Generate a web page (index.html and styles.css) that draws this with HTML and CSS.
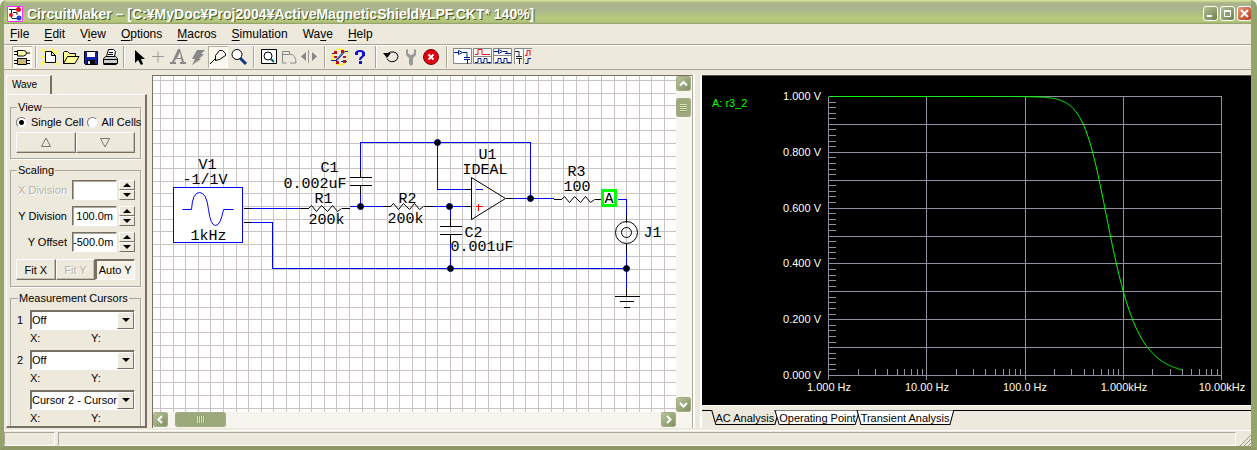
FILE: index.html
```html
<!DOCTYPE html>
<html lang="en">
<head>
<meta charset="utf-8">
<title>CircuitMaker</title>
<link rel="stylesheet" href="styles.css">
</head>
<body>
<div class="window">
  <header class="titlebar">
    <svg class="app-icon" width="16" height="16" viewBox="0 0 16 16"><path fill="#fff" stroke="#f3f" d="M.5 .5h15v15H.5z"/><path fill="none" stroke="#222" d="M2 3.500h8M4.500 4v8M6 6.500h4V9M5 12.500h6"/><circle cx="11.500" cy="3.500" r="2.500" fill="#e11"/><circle cx="4" cy="9" r="2" fill="#e11"/><circle cx="12" cy="12" r="2.500" fill="#14d"/></svg>
    <h1 class="title">CircuitMaker – [C:¥MyDoc¥Proj2004¥ActiveMagneticShield¥LPF.CKT* 140%]</h1>
    <div class="window-buttons">
      <button class="win-btn" aria-label="Minimize"><svg width="13" height="13"><path fill="#fff" d="M3 8h5v2H3z"/></svg></button>
      <button class="win-btn" aria-label="Maximize"><svg width="13" height="13"><path fill="none" stroke="#fff" d="M3.500 3.500h6v6h-6zM3 4.500h7"/></svg></button>
      <button class="win-btn close" aria-label="Close"><svg width="13" height="13"><path stroke="#fff" stroke-width="2" d="M3 3l7 7M10 3l-7 7"/></svg></button>
    </div>
  </header>
  <nav class="menubar">
    <button><u>F</u>ile</button><button><u>E</u>dit</button><button>V<u>i</u>ew</button><button><u>O</u>ptions</button><button><u>M</u>acros</button><button><u>S</u>imulation</button><button>Wa<u>v</u>e</button><button><u>H</u>elp</button>
  </nav>
  <div class="toolbar" role="toolbar">
    <button class="tool pressed" aria-label="Parts"><svg width="20" height="20" viewBox="0 0 20 20"><path d="M5.500 3.500h6q3 0 3 2.500t-3 3h-6zM2 4.500h3M2 7.500h3M15 6h3" fill="#ffa" stroke="#000"/><path d="M5.500 11.500h9v6h-9z" fill="#c8b880" stroke="#000"/><path d="M2 13.500h3M2 16.500h3M15 13.500h3M15 16.500h3" stroke="#000"/></svg></button>
    <span class="sep"></span>
    <button class="tool" aria-label="New"><svg width="20" height="20" viewBox="0 0 20 20"><path stroke="#ff3" stroke-width="2" d="M2 2l5 5M13 1v5M18 4l-4 4M1 18l5-5M18 18l-4-4M1 10h4"/><path fill="#fff" stroke="#000" d="M5.500 4.500h6l4 4v7h-10zM11.500 4.500v4h4"/></svg></button>
    <button class="tool" aria-label="Open"><svg width="20" height="20" viewBox="0 0 20 20"><path fill="#ff9" stroke="#000" d="M3.500 16.500v-11l1-1h3l2 2h6v3M3.500 16.500l4-7h11.500l-4 7z"/></svg></button>
    <button class="tool" aria-label="Save"><svg width="20" height="20" viewBox="0 0 20 20"><path fill="#12a" stroke="#000" d="M4.500 4.500h13v13h-12l-1-1z"/><path fill="#fff" d="M7 5h8v5H7z"/><path fill="#000" d="M7 13h8v4H7z"/><path fill="#ddd" d="M8 14h2v3H8z"/></svg></button>
    <button class="tool" aria-label="Print"><svg width="20" height="20" viewBox="0 0 20 20"><path fill="#fff" stroke="#000" d="M6.500 9.500l2-7h5l2 2-1 5M9 5.500h4M8 7.500h5"/><path fill="#ccc" stroke="#000" d="M3.500 11.500l2-2h10l2 2v5h-14zM3 12.500h14M3.500 17.500h13"/></svg></button>
    <span class="sep"></span>
    <button class="tool" aria-label="Select"><svg width="20" height="20" viewBox="0 0 20 20"><path d="M7 3v13l3-3 3 5 2-1-2-5h4z"/></svg></button>
    <button class="tool" aria-label="Wire"><svg width="20" height="20" viewBox="0 0 20 20"><path stroke="#999" d="M10 4.500v11M4 9.500h12"/></svg></button>
    <button class="tool" aria-label="Text"><svg width="20" height="20" viewBox="0 0 20 20"><path fill="#888" d="M10 2h2l4 13h2v2h-6v-2h2l-1-3H8l-2 3h2v2H2v-2h2zM9 11h4l-1-6z"/></svg></button>
    <button class="tool" aria-label="Delete"><svg width="20" height="20" viewBox="0 0 20 20"><path fill="#888" d="M9 3h8l-4 4h3l-5 5h2l-9 6 3-6H4z"/></svg></button>
    <button class="tool pressed" aria-label="Probe"><svg width="20" height="20" viewBox="0 0 20 20"><path fill="none" stroke="#000" d="M2 17l6-6M7.500 8.500l4-5h3l3 3v2l-6 4-4 1z"/></svg></button>
    <button class="tool" aria-label="Zoom"><svg width="20" height="20" viewBox="0 0 20 20"><circle cx="9" cy="7.500" r="5" fill="#fff" stroke="#000"/><path stroke="#138" stroke-width="3" d="M12 11l6 6"/></svg></button>
    <span class="sep wide"></span>
    <button class="tool" aria-label="Fit"><svg width="20" height="20" viewBox="0 0 20 20"><path fill="#fff" stroke="#000" d="M2.500 2.500h15v14h-15z"/><circle cx="9" cy="9" r="4" fill="none" stroke="#000"/><path stroke="#066" stroke-width="2" d="M12 12l3 3"/></svg></button>
    <button class="tool" aria-label="Rotate"><svg width="20" height="20" viewBox="0 0 20 20"><path fill="none" stroke="#888" d="M3.500 4.500h7v3h-7zM3.500 7v9h4M11 7q6 1 6 9h-6"/></svg></button>
    <button class="tool" aria-label="Mirror"><svg width="20" height="20" viewBox="0 0 20 20"><path fill="#888" d="M7 5v9L2 9.500zM13 5v9l5-4.500z"/><path stroke="#999" d="M9.500 3v13"/></svg></button>
    <span class="sep wide"></span>
    <button class="tool" aria-label="Check"><svg width="20" height="20" viewBox="0 0 20 20"><circle cx="10" cy="10" r="8" fill="none" stroke="#fe0"/><path stroke="#129" fill="none" d="M1 13.500h6l8-9h3M2 6.500h4M11 14.500h6M6 13l8-9"/><path fill="#b11" d="M4 4h3v3H4zM11 3h3v3h-3zM4 9h3v2H4zM13 9h3v2h-3zM6 14h3v3H6zM13 13h3v3h-3z"/></svg></button>
    <button class="tool" aria-label="Help"><svg width="20" height="20" viewBox="0 0 20 20"><path fill="none" stroke="#11c" stroke-width="2" d="M6 7q0-3 4-3t4 3q0 2-2 3t-2 3"/><path fill="#11c" d="M9 14h3v3H9zM5 5h3v3H5zM12 5h3v4h-3z"/></svg></button>
    <span class="sep wide"></span>
    <button class="tool" aria-label="Reset"><svg width="20" height="20" viewBox="0 0 20 20"><path fill="none" stroke="#000" d="M6 7q3-3 7-2 4 1 4 4.500t-4 5q-5 1-7-3"/><path d="M2 6h8l-4 5z"/></svg></button>
    <button class="tool" aria-label="Step"><svg width="20" height="20" viewBox="0 0 20 20"><path fill="#999" d="M5 3l2-1v4l2 2h2l2-2V2l2 1v5l-3 3v6l-2 2-2-2v-6L5 8z"/></svg></button>
    <button class="tool" aria-label="Stop"><svg width="20" height="20" viewBox="0 0 20 20"><circle cx="10" cy="10" r="7.500" fill="#e00010" stroke="#700"/><path stroke="#fff" stroke-width="2" d="M7.500 7.500l5 5M12.500 7.500l-5 5"/></svg></button>
    <span class="sep wide"></span>
    <button class="tool" aria-label="Schematic view"><svg width="20" height="20" viewBox="0 0 20 20"><path fill="#fff" stroke="#888" d="M1.500 1.500h18v15h-18z"/><path fill="none" stroke="#028" d="M2 5.500h4M6.500 3.500v4l4-2zM11 5.500h4v5M12 10.500h6M12 12.500h6M15.500 13v4"/></svg></button>
    <button class="tool" aria-label="Waveforms view"><svg width="20" height="20" viewBox="0 0 20 20"><path fill="#fff" stroke="#888" d="M1.500 1.500h18v15h-18zM2 9.500h17"/><path fill="none" stroke="#e11" d="M3 7.500h3v-5h4v5h8"/><path fill="none" stroke="#028" d="M3 15.500h3v-4h3v4h3v-4h3v4h4"/></svg></button>
    <button class="tool" aria-label="Split horizontally"><svg width="20" height="20" viewBox="0 0 20 20"><path fill="#fff" stroke="#888" d="M1.500 1.500h18v15h-18zM2 8.500h17"/><path fill="none" stroke="#028" d="M2 4.500h4M6.500 2.500v4l4-2zM11 4.500h4v2M13 6.500h6M3 15.500h3v-4h3v4h3v-4h3v4h4"/></svg></button>
    <button class="tool" aria-label="Split vertically"><svg width="20" height="20" viewBox="0 0 20 20"><path fill="#fff" stroke="#888" d="M2.500 17V1.500H20M11.500 2v15"/><path fill="none" stroke="#222" d="M3 4.500h4v5M4 9.500h6M4 11.500h6M7.500 12v5"/><path fill="none" stroke="#e11" d="M13 8.500h2v-5h3v5"/><path fill="none" stroke="#028" d="M13 16.500h3v-5h3"/></svg></button>
  </div>
  <main class="workspace">
    <aside class="sidebar">
      <div class="tabs" role="tablist"><button class="side-tab" role="tab" aria-selected="true">Wave</button></div>
      <div class="pane">
        <fieldset class="group">
          <legend>View</legend>
          <div class="radios">
            <label><input type="radio" name="view" checked>Single Cell</label>
            <label><input type="radio" name="view">All Cells</label>
          </div>
          <div class="button-row">
            <button class="btn" aria-label="Previous"><svg width="12" height="11"><path fill="none" stroke="#776" d="M1.500 9.500h9L6 1z"/></svg></button>
            <button class="btn" aria-label="Next"><svg width="12" height="11"><path fill="none" stroke="#776" d="M1.500 1.500h9L6 10z"/></svg></button>
          </div>
        </fieldset>
        <fieldset class="group scaling">
          <legend>Scaling</legend>
          <div class="field"><label class="disabled" for="xdiv">X Division</label><input id="xdiv" type="text" value="" disabled><span class="spin"><button aria-label="Increase X division"><i class="up"></i></button><button aria-label="Decrease X division"><i class="down"></i></button></span></div>
          <div class="field"><label for="ydiv">Y Division</label><input id="ydiv" type="text" value="100.0m"><span class="spin"><button aria-label="Increase Y division"><i class="up"></i></button><button aria-label="Decrease Y division"><i class="down"></i></button></span></div>
          <div class="field"><label for="yoff">Y Offset</label><input id="yoff" type="text" value="-500.0m"><span class="spin"><button aria-label="Increase Y offset"><i class="up"></i></button><button aria-label="Decrease Y offset"><i class="down"></i></button></span></div>
          <div class="button-row fit"><button class="btn">Fit X</button><button class="btn" disabled>Fit Y</button><button class="btn down-state">Auto Y</button></div>
        </fieldset>
        <fieldset class="group cursors">
          <legend>Measurement Cursors</legend>
          <div class="cursor"><label for="c1">1</label><span class="combo"><select id="c1"><option>Off</option></select><i class="drop"></i></span></div>
          <div class="xy"><span>X:</span><span>Y:</span></div>
          <div class="cursor"><label for="c2">2</label><span class="combo"><select id="c2"><option>Off</option></select><i class="drop"></i></span></div>
          <div class="xy"><span>X:</span><span>Y:</span></div>
          <div class="cursor"><span></span><span class="combo"><select aria-label="Difference"><option>Cursor 2 - Cursor</option></select><i class="drop"></i></span></div>
          <div class="xy"><span>X:</span><span>Y:</span></div>
        </fieldset>
      </div>
    </aside>
    <section class="schematic">
      <svg class="sheet">
        <g transform="translate(-152.5 -75.5)">
          <path id="grid" class="grid"/>
          <path class="wire" d="M250 208H299M349 206H382M432 206H464M250 222H272V268H626M360 169V142H530V198M360 193V206M437 142V189H464M450 206V217M450 243V268M513 198H553M617 199H626V214M626 252V288"/>
          <path class="part" d="M243 208H250M243 222H250M299 208H308M341 208H349M360 169V177M349 177H371M349 185H371M360 185V193M382 206H390M423 206H432M464 189H471M464 206H471M450 217V226M439 226H461M439 234H461M450 234V243M505 198H513M553 199H561M594 199H601M626 214V222M626 243V252M626 288V296M614 296H639M619 301H633M623 307H629"/>
          <path class="slope" d="M308 208l3-3 5 6 5-6 6 6 5-6 5 6 4-3M390 206l3-3 5 6 5-6 6 6 5-6 5 6 4-3M561 199l3-3 5 6 5-6 6 6 5-6 5 6 4-3M471 177V219L505 198Z"/>
          <path class="wire" d="M475 189H482"/>
          <circle class="slope" cx="626" cy="232" r="11"/><circle class="slope" cx="626" cy="232" r="5"/>
          <path class="source" d="M173 187H242V242H173Z"/>
          <path class="wave" d="M182 209H191Q192 192 199 192T208 209Q210 225 215 225T223 209H233"/>
          <path class="plus" d="M475 206H482M478 203V210"/>
          <g class="dots"><circle cx="360" cy="206" r="3"/><circle cx="437" cy="142" r="3"/><circle cx="449" cy="206" r="3"/><circle cx="530" cy="198" r="3"/><circle cx="450" cy="268" r="3"/><circle cx="626" cy="268" r="3"/></g>
          <path class="probe" d="M602 190H615V205H602Z"/>
          <g class="labels"><text x="198" y="168">V1</text><text x="182" y="183">-1/1V</text><text x="190" y="239">1kHz</text><text x="320" y="171">C1</text><text x="283" y="187">0.002uF</text><text x="314" y="202">R1</text><text x="308" y="223">200k</text><text x="398" y="202">R2</text><text x="387" y="222">200k</text><text x="478" y="158">U1</text><text x="462" y="173">IDEAL</text><text x="464" y="236">C2</text><text x="450" y="250">0.001uF</text><text x="567" y="175">R3</text><text x="563" y="190">100</text><text x="604" y="202">A</text><text x="643" y="236">J1</text></g>
        </g>
      </svg>
      <div class="scroll vertical"><button class="arrow" aria-label="Scroll up"><svg width="13" height="13"><path d="M3 8.500L6.500 5 10 8.500"/></svg></button><span class="thumb"></span><button class="arrow last" aria-label="Scroll down"><svg width="13" height="13"><path d="M3 5l3.500 3.500L10 5"/></svg></button></div>
      <div class="scroll horizontal"><button class="arrow" aria-label="Scroll left"><svg width="13" height="13"><path d="M8 3L4.500 6.500 8 10"/></svg></button><span class="thumb"></span><button class="arrow last" aria-label="Scroll right"><svg width="13" height="13"><path d="M5 3l3.500 3.500L5 10"/></svg></button></div>
    </section>
    <div class="splitter"></div>
    <section class="analysis">
      <svg class="plot" viewBox="702 76 549 329" preserveAspectRatio="xMinYMin">
        <g transform="translate(.5 .5)">
          <path id="plot-grid" class="plot-grid"/>
          <path id="plot-ticks" class="plot-grid"/>
          <path id="trace" class="trace"/>
        </g>
        <text class="trace-name" x="712" y="107">A: r3_2</text>
        <g class="axis" text-anchor="end"><text x="821" y="100">1.000 V</text><text x="821" y="156">0.800 V</text><text x="821" y="212">0.600 V</text><text x="821" y="267">0.400 V</text><text x="821" y="323">0.200 V</text><text x="821" y="379">0.000 V</text></g>
        <g class="axis" text-anchor="middle"><text x="829" y="391">1.000 Hz</text><text x="927" y="391">10.00 Hz</text><text x="1025" y="391">100.0 Hz</text><text x="1124" y="391">1.000kHz</text><text x="1222" y="391">10.00kHz</text></g>
      </svg>
      <div class="sheet-tabs" role="tablist">
        <button class="sheet-tab active" role="tab" aria-selected="true"><svg viewBox="0 0 100 15" preserveAspectRatio="none"><path d="M1 0L7 14.500H93L99 0"/></svg><span>AC Analysis</span></button>
        <button class="sheet-tab" role="tab"><svg viewBox="0 0 100 15" preserveAspectRatio="none"><path d="M1 0L6 14.500H94L99 0Z"/></svg><span>Operating Point</span></button>
        <button class="sheet-tab" role="tab"><svg viewBox="0 0 100 15" preserveAspectRatio="none"><path d="M1 0L5 14.500H95L99 0Z"/></svg><span>Transient Analysis</span></button>
      </div>
    </section>
  </main>
  <footer class="statusbar"><span class="status-cell"></span><span class="status-main"></span><svg width="12" height="12"><path stroke="#998" d="M1 12L12 1M5 12l7-7M9 12l3-3"/></svg></footer>
</div>
<script src="script.js"></script>
</body>
</html>
```
FILE: styles.css
```css
* { box-sizing: border-box; }
body { margin: 0; background: #eef2e2; font-family: "Liberation Sans", Arial, sans-serif; font-size: 11px; color: #000; }
button, input, select { font: inherit; color: inherit; margin: 0; padding: 0; border: 0; background: none; border-radius: 0; }
svg { display: block; }

.window { display: flex; flex-direction: column; height: 100vh; min-height: 450px; background: #eee9dd; border: solid #94a46a; border-width: 0 6px 4px 4px; border-bottom-color: #8d9866; border-radius: 7px 7px 0 0; overflow: hidden; }

.titlebar { flex: none; display: flex; align-items: center; height: 24px; padding: 3px 0 0 3px; margin-right: -1px; background: linear-gradient(#dcea9c 0, #a9b38a 3px, #abb58c 10px, #b5ca7c 18px, #b3c47d 22px, #8f9c67 24px); }
.title { flex: 1; margin: 0 0 0 4px; font-size: 14px; line-height: 16px; color: #fff; text-shadow: 1px 1px 0 #4a5522; white-space: nowrap; overflow: hidden; }
.window-buttons { display: flex; gap: 2px; }
.win-btn { width: 15px; height: 15px; border: 1px solid #fff; border-radius: 3px; background: linear-gradient(135deg, #b2bf92, #6d8050); }
.win-btn.close { background: linear-gradient(135deg, #e89a7c, #b8351a); }

.menubar { flex: none; display: flex; gap: 15px; height: 20px; padding: 0 6px; font-size: 12px; }
.menubar button { white-space: nowrap; line-height: 18px; }
.menubar u { text-underline-offset: 2px; }

.toolbar { flex: none; display: flex; align-items: center; height: 26px; padding-left: 8px; border-top: 1px solid #aca394; border-bottom: 1px solid #aca394; box-shadow: inset 0 1px #fff; }
.tool { width: 20px; height: 22px; display: flex; align-items: center; justify-content: center; overflow: hidden; }
.tool.pressed { background: #fbf8f0; box-shadow: inset 1px 1px #b5b0a0, inset -1px -1px #fff; }
.sep { width: 8px; height: 22px; background: linear-gradient(90deg, #aaa494 1px, #fff 1px) center / 2px 100% no-repeat; }
.sep.wide { width: 11px; }

.workspace { flex: 1; display: flex; min-height: 0; padding-top: 5px; }

.sidebar { flex: none; width: 143px; display: flex; flex-direction: column; padding: 0 0 2px 2px; }
.tabs { flex: none; display: flex; height: 19px; }
.side-tab { width: 46px; padding-right: 8px; border: solid #fff; border-width: 1px 0 0 1px; border-right: 2px solid #777063; font-size: 10px; line-height: 16px; }
.pane { flex: 1; min-height: 0; display: flex; flex-direction: column; gap: 4px; padding: 5px 4px 0 3px; border: 1px solid #fff; border-right: 2px solid #777063; border-bottom: 2px solid #777063; overflow: hidden; }
.group { flex: none; min-width: 0; margin: 0; border: 1px solid #aca899; box-shadow: 1px 1px #fff; padding: 0 5px 4px; height: 59px; }
.group legend { padding: 0 1px; margin-left: 1px; line-height: 14px; }
.scaling { height: 124px; }
.cursors { height: 150px; padding-left: 6px; }
.radios { display: flex; gap: 3px; height: 16px; margin: 0 -5px 2px 0; align-items: center; white-space: nowrap; }
.radios label { display: flex; align-items: center; gap: 4px; }
.radios input { appearance: none; width: 11px; height: 11px; border-radius: 50%; border: 1px solid; border-color: #777 #eee #eee #777; background: #fff; }
.radios input:checked { background: radial-gradient(circle, #000 2px, #fff 3px); }
.button-row { display: flex; }
.btn { flex: 1; height: 21px; display: flex; align-items: center; justify-content: center; border: 1px solid; border-color: #fff #777063 #777063 #fff; box-shadow: inset -1px -1px #c5bfae; white-space: nowrap; }
.btn:disabled { color: #b5b1a4; text-shadow: 1px 1px #fff; }
.btn.down-state { border-color: #777063 #fff #fff #777063; box-shadow: inset 1px 1px #777063; background: #f7f3e8; }
.field { display: flex; align-items: center; height: 26px; }
.field label { flex: 1; text-align: right; padding-right: 5px; white-space: nowrap; }
.field .disabled { color: #b5b1a4; text-shadow: 1px 1px #fff; }
.field input { width: 45px; height: 20px; text-align: right; padding-right: 3px; background: #fff; border: 1px solid; border-color: #777063 #fff #fff #777063; box-shadow: inset 1px 1px #aca899; }
.spin { width: 16px; margin-left: 2px; display: flex; flex-direction: column; }
.spin button { height: 10px; display: flex; align-items: center; justify-content: center; border: 1px solid; border-color: #fff #777063 #777063 #fff; }
.up, .down, .drop { border: solid transparent; border-width: 0 4px; }
.up { border-bottom: 4px solid #000; }
.down, .drop { border-top: 4px solid #000; }
.fit { margin-top: 4px; }
.cursor { display: grid; grid-template-columns: 13px 1fr; align-items: center; height: 20px; margin-top: 5px; }
.xy + .cursor { margin-top: 4px; }
.combo { position: relative; display: flex; height: 20px; background: #fff; border: 1px solid; border-color: #777063 #fff #fff #777063; box-shadow: inset 1px 1px #777063; }
.combo select { appearance: none; flex: 1; min-width: 0; padding-left: 1px; }
.combo .drop { position: absolute; right: 4px; top: 7px; z-index: 1; pointer-events: none; }
.combo::after { content: ""; position: absolute; right: 0; top: 1px; bottom: 0; width: 15px; background: #ede8dc; border: 1px solid; border-color: #fff #777063 #777063 #fff; pointer-events: none; }
.xy { display: grid; grid-template-columns: 61px 1fr; height: 16px; padding-left: 13px; line-height: 17px; }

.schematic { flex: 538 1 0; min-width: 0; margin: 0 0 2px 5px; display: grid; grid-template: minmax(0, 1fr) 16px / minmax(0, 1fr) 16px; border: solid #777063; border-width: 1px 0 0 1px; background: #f8f5ee; }
.sheet { width: 100%; height: 100%; background: #fff; }
.sheet path { fill: none; shape-rendering: crispEdges; }
.sheet .grid { stroke: #c9c4c3; }
.sheet .wire { stroke: #00f; }
.sheet .part { stroke: #000; }
.sheet .slope { stroke: #000; fill: none; shape-rendering: auto; }
.sheet .source { stroke: #00f; fill: #fff; }
.sheet .wave { stroke: #00f; shape-rendering: auto; }
.sheet .plus { stroke: #f00; }
.sheet .probe { stroke: #0f0; stroke-width: 3; fill: #fff; }
.dots { fill: #000; stroke: #006; }
.labels { font: 15px "Liberation Mono", "Courier New", monospace; }
.scroll { display: flex; gap: 7px; }
.vertical { flex-direction: column; }
.arrow, .thumb { flex: none; width: 15px; height: 15px; border: 1px solid #fff; border-radius: 2px; outline: 1px solid #a5ac88; outline-offset: -1px; background: linear-gradient(135deg, #b8c49a, #7e9060); }
.arrow path { fill: none; stroke: #fff; stroke-width: 2; }
.vertical .thumb { height: 19px; background: repeating-linear-gradient(#d9e2bb 0 1px, #8c9c68 1px 2px) center / 7px 8px no-repeat, #9caa7b; }
.horizontal .thumb { width: 51px; background: repeating-linear-gradient(90deg, #d9e2bb 0 1px, #8c9c68 1px 2px) center / 8px 7px no-repeat, #9caa7b; }
.vertical .last { margin-top: auto; }
.horizontal .last { margin-left: auto; }
.splitter { flex: none; width: 10px; margin-bottom: 2px; border-left: 1px solid #aca899; border-right: 2px solid #fff; background: linear-gradient(90deg, #fff 2px, #ede8dc 2px); }

.analysis { flex: 549 1 0; min-width: 0; display: flex; flex-direction: column; border-top: 1px solid #555046; }
.plot { flex: 1; min-height: 0; width: 100%; background: #000; }
.plot path { fill: none; }
.plot-grid { stroke: #9090a0; shape-rendering: crispEdges; }
.plot .trace { stroke: #0f0; }
.trace-name { fill: #0f0; }
.axis { fill: #ffffe8; }
.sheet-tabs { flex: none; display: flex; height: 25px; padding: 5px 0 5px 9px; background: linear-gradient(#fff 1px, transparent 1px 5px, #000 5px 6px, transparent 6px); }
.sheet-tab { position: relative; padding: 0 5px; white-space: nowrap; }
.sheet-tab + .sheet-tab { margin-left: -5px; }
.sheet-tab svg { position: absolute; inset: 0; width: 100%; height: 100%; }
.sheet-tab path { fill: #fff; stroke: #000; vector-effect: non-scaling-stroke; }
.sheet-tab.active path { fill: #ede8dc; }
.sheet-tab span { position: relative; }

.statusbar { flex: none; display: flex; gap: 3px; align-items: flex-end; height: 16px; border-top: 1px solid #fff; }
.status-cell, .status-main { height: 14px; border: 1px solid; border-color: #aca899 #fff #fff #aca899; }
.status-cell { width: 51px; }
.status-main { flex: 1; }
```
FILE: script.js
```js
// Schematic grid, wide enough for a maximised window
var grid = "";
for (var k = 0; k < 200; k++) {
  grid += "M" + Math.floor(160.4 + 12.6 * k) + " 0V2000M0 " + Math.floor(80.4 + 12.6 * k) + "H3000";
}
document.getElementById("grid").setAttribute("d", grid);

// Frequency axis: 1 Hz to 10 kHz, voltage axis: 0 to 1 V
function fx(f) { return 828 + 98.25 * Math.log10(f); }
function vy(v) { return 375 - 279 * v; }

var lines = "", ticks = "";
for (var i = 0; i <= 10; i++) lines += "M828 " + Math.round(vy(i / 10)) + "H1221";
for (var d = 0; d <= 4; d++) lines += "M" + Math.round(fx(Math.pow(10, d))) + " 96V379";
for (var j = 0; j <= 50; j++) ticks += "M828 " + Math.round(vy(j / 50)) + "h7";
for (var e = 0; e < 4; e++) {
  for (var m = 2; m < 10; m++) ticks += "M" + Math.round(fx(m * Math.pow(10, e))) + " 368V375";
}
document.getElementById("plot-grid").setAttribute("d", lines);
document.getElementById("plot-ticks").setAttribute("d", ticks);

// Second-order Butterworth response, cutoff 562 Hz
var trace = "";
for (var s = 0; s <= 360; s++) {
  var f = Math.pow(10, s / 360 * Math.log10(4000));
  trace += (s ? "L" : "M") + fx(f).toFixed(1) + " " + vy(1 / Math.sqrt(1 + Math.pow(f / 562.7, 4))).toFixed(1);
}
document.getElementById("trace").setAttribute("d", trace);
```
